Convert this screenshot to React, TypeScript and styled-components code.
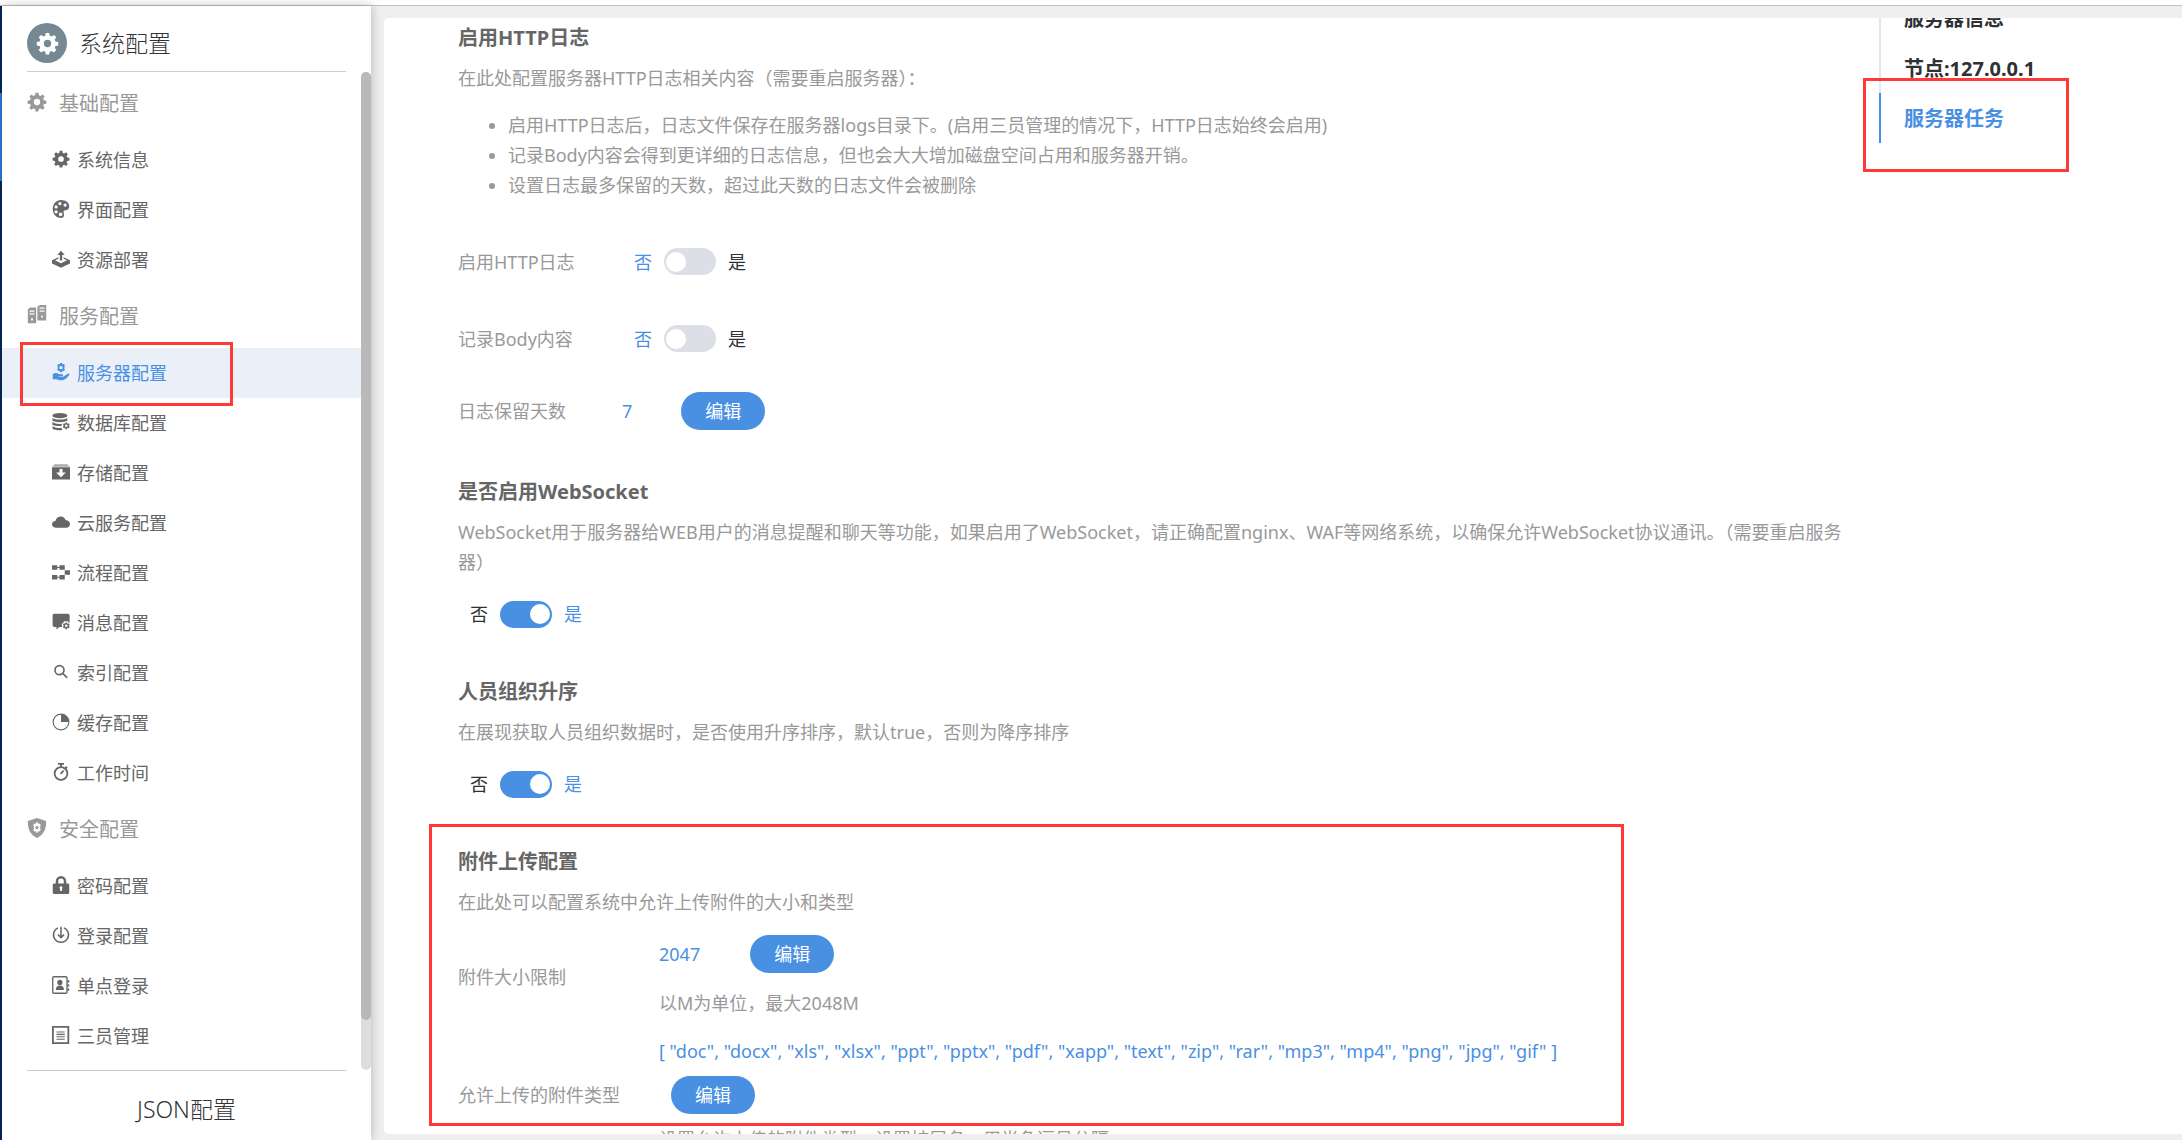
import React from "react";
import styled, { createGlobalStyle, css } from "styled-components";

const blue = "#4a90e2";

const GlobalStyle = createGlobalStyle`
  *, *::before, *::after { box-sizing: border-box; }
  body {
    margin: 0;
    background: #efefef;
    color: #333;
    font-family: "Noto Sans", "Noto Sans CJK SC", sans-serif;
    font-size: 18px;
    line-height: 30px;
  }
  h1, h2, p, ul { margin: 0; padding: 0; font-weight: inherit; }
  button, input { font: inherit; color: inherit; }
`;

const Page = styled.div`
  display: flex;
  flex-direction: column;
  height: 100vh;
  overflow: hidden;
`;

const TopBar = styled.header`
  flex: none;
  height: 6px;
  background: #fff;
  border-bottom: 1px solid #c0c0c0;
`;

const Body = styled.div`
  flex: 1;
  min-height: 0;
  display: flex;
`;

const Edge = styled.div`
  flex: none;
  width: 2px;
  background: linear-gradient(#06285a 87px, #2f7bdc 87px, #2f7bdc 175px, #06285a 175px);
`;

const Sidebar = styled.aside`
  flex: none;
  width: 369px;
  display: flex;
  flex-direction: column;
  background: #fff;
  box-shadow: 0 0 10px rgba(0, 0, 0, 0.25);
`;

const SideTitle = styled.div`
  flex: none;
  height: 66px;
  margin: 0 25px;
  padding: 17px 0 8px;
  display: flex;
  align-items: center;
  gap: 12px;
  border-bottom: 1px solid #ccc;

  h1 { font-size: 23px; font-weight: 300; }
`;

const Badge = styled.span`
  width: 40px;
  height: 40px;
  border-radius: 50%;
  display: grid;
  place-items: center;
  color: #fff;
  background: #768893;
`;

const MenuArea = styled.div`
  flex: 1;
  min-height: 0;
  display: flex;
`;

const Menu = styled.nav`
  flex: 1;
`;

const Track = styled.div`
  width: 10px;
  border-radius: 5px;
  background: #ddd;
`;

const Thumb = styled.div`
  height: 95%;
  border-radius: 5px;
  background: #b9b9b9;
`;

const GroupTitle = styled.h2`
  height: 63px;
  padding-left: 25px;
  display: flex;
  align-items: center;
  gap: 12px;
  color: #999;
  font-size: 20px;

  svg { width: 20px; height: 20px; margin-bottom: 4px; }
`;

const Item = styled.a<{ $active?: boolean }>`
  position: relative;
  height: 50px;
  padding-left: 50px;
  display: flex;
  align-items: center;
  gap: 7px;
  color: ${(p) => (p.$active ? blue : "#666")};
  background: ${(p) => (p.$active ? "#ebf0f8" : "transparent")};
  text-decoration: none;

  svg { width: 18px; height: 18px; margin-bottom: 2px; }
`;

const SideFooter = styled.a`
  flex: none;
  height: 70px;
  margin: 0 25px;
  padding-top: 7px;
  display: flex;
  align-items: center;
  justify-content: center;
  border-top: 1px solid #ccc;
  color: #333;
  font-size: 23px;
  font-weight: 300;
  text-decoration: none;
`;

const Panel = styled.div`
  flex: 1;
  min-width: 0;
  margin: 12px 0 6px 13px;
  border-radius: 5px 0 0 5px;
  display: flex;
  overflow: hidden;
  background: #fff;
`;

const Content = styled.main`
  flex: 1;
  min-width: 0;
  padding: 5px 20px 0 74px;
  color: #999;
`;

const Section = styled.section<{ $gap?: number }>`
  position: relative;
  display: flex;
  flex-direction: column;
  margin-bottom: ${(p) => p.$gap ?? 0}px;
`;

const Heading = styled.h2`
  margin-bottom: 10px;
  color: #666;
  font-size: 20px;
  font-weight: 700;
`;

const Notes = styled.ul`
  margin-top: 17px;
  margin-bottom: 23px;
  padding-left: 50px;
`;

const Row = styled.div<{ $height: number }>`
  min-height: ${(p) => p.$height}px;
  display: grid;
  grid-template-columns: 164px 1fr;
  align-items: center;
`;

const UploadRow = styled.div`
  display: grid;
  grid-template-columns: 201px 1fr;
  align-items: center;
  margin-top: 18px;
`;

const Stack = styled.div<{ $gap: number }>`
  display: flex;
  flex-direction: column;
  gap: ${(p) => p.$gap}px;
`;

const Line = styled.div<{ $gap?: number; $indent?: number }>`
  display: flex;
  align-items: center;
  gap: ${(p) => p.$gap ?? 0}px;
  padding-left: ${(p) => p.$indent ?? 0}px;
`;

const Value = styled.span`
  color: ${blue};
`;

const EditButton = styled.button`
  width: 84px;
  height: 38px;
  padding: 0;
  border: 0;
  border-radius: 19px;
  background: ${blue};
  color: #fff;
  cursor: pointer;
`;

const SwitchLabel = styled.label<{ $top?: number }>`
  display: flex;
  align-items: center;
  gap: 12px;
  margin-top: ${(p) => p.$top ?? 0}px;
  padding-left: 12px;
`;

const SwitchWord = styled.span<{ $on: boolean }>`
  color: ${(p) => (p.$on ? blue : "#303133")};
`;

const SwitchInput = styled.input`
  appearance: none;
  width: 52px;
  height: 27px;
  margin: 0;
  padding: 2px;
  display: flex;
  align-items: center;
  border-radius: 14px;
  background: #dcdfe6;
  cursor: pointer;

  &::before {
    content: "";
    width: 20px;
    height: 20px;
    border-radius: 50%;
    background: #fff;
  }

  &:checked {
    justify-content: flex-end;
    background: ${blue};
  }
`;

const Anchors = styled.nav`
  flex: none;
  width: 303px;
  margin-top: -25px;
  display: flex;
  flex-direction: column;
`;

const Anchor = styled.a<{ $active?: boolean }>`
  position: relative;
  height: 50px;
  padding-left: 23px;
  border-left: 2px solid #e4e7ed;
  color: #303133;
  font-size: 20px;
  font-weight: 700;
  line-height: 52px;
  text-decoration: none;

  ${(p) => p.$active && css`
    border-color: ${blue};
    color: ${blue};
  `}
`;

const Mark = styled.span<{ $box: string; $w: string; $h: number }>`
  position: absolute;
  inset: ${(p) => p.$box};
  width: ${(p) => p.$w};
  height: ${(p) => p.$h}px;
  border: 3px solid #ff3838;
  pointer-events: none;
  z-index: 2;
`;

const gearPath =
  "M10.2 1h3.6l.5 2.9 2 .8 2.400-1.700 2.500 2.500-1.700 2.400.8 2 2.900.5v3.600l-2.900.5-.8 2 1.700 2.400-2.500 2.500-2.400-1.700-2 .8-.5 2.900h-3.600l-.5-2.900-2-.8-2.400 1.700-2.500-2.500 1.700-2.400-.8-2-2.900-.5v-3.600l2.900-.5.8-2-1.700-2.400 2.500-2.500 2.400 1.700 2-.8zM12 8.200a3.800 3.800 0 1 0 0 7.600 3.800 3.800 0 0 0 0-7.600z";

const smallGear =
  "M18 12.500h2l.5 1.800 1.800-.6 1.200 1.800-1.200 1.500 1.200 1.500-1.200 1.800-1.800-.6-.5 1.800h-2l-.5-1.800-1.800.6-1.200-1.800 1.200-1.500-1.200-1.500 1.200-1.800 1.800.6zM19 15.300a1.700 1.700 0 1 0 0 3.400 1.700 1.700 0 0 0 0-3.400z";

const glyphs: Record<string, React.ReactNode> = {
  gear: <path fillRule="evenodd" d={gearPath} />,
  servers: (
    <path fillRule="evenodd" d="M1 5l3-2h7v19H1zM3 6.500v1.500h6V6.500zM3 10v1.500h6V10zM5 16v2.500h2V16zM12.500 2l3-2H23v18.500H12.500zM15 3v1.500h6V3zM15 6.500V8h6V6.500zM17 12.500V15h2v-2.500z" />
  ),
  shield: (
    <path fillRule="evenodd" d="M12 0l11 3.500c.3 9-2.500 16-11 20.500C3.500 19.500.7 12.500 1 3.500zM10.800 5.500l-.5 1.600-1.600-.4-1.300 2 1.200 1.300-.8 1.500.8 1.400-1.200 1.200 1.300 2 1.600-.4.5 1.600h2.400l.5-1.600 1.600.4 1.300-2-1.200-1.200.8-1.400-.8-1.500 1.200-1.300-1.300-2-1.600.4-.5-1.600zM12 9.500a2 2 0 1 1 0 4 2 2 0 0 1 0-4z" />
  ),
  palette: (
    <path fillRule="evenodd" d="M12 0c6.500 0 11 3.800 11 8.500 0 3.500-2.500 5-5 5-2.200 0-3 1.200-2.500 3l.5 3c.4 2.500-1.500 4.500-4 4.500C5.500 24 1 18.500 1 12S5.500 0 12 0zM10.500 2.500a2.200 2.200 0 1 0 0 4.400 2.200 2.200 0 0 0 0-4.400zM17.500 4.500a2.200 2.200 0 1 0 0 4.400 2.200 2.200 0 0 0 0-4.400zM5.500 7a2.200 2.200 0 1 0 0 4.400 2.200 2.200 0 0 0 0-4.400zM5.500 13.500a2.200 2.200 0 1 0 0 4.400 2.200 2.200 0 0 0 0-4.400zM11.500 16.500a2.500 2.500 0 1 0 0 5 2.500 2.500 0 0 0 0-5z" />
  ),
  deploy: (
    <path fillRule="evenodd" d="M12 1l5 5.500h-3.500V14h-3V6.500H7zM8.500 9.500v2L4 13.800l8 3.700 8-3.700-4.500-2.300v-2l8.500 4V18l-12 5.500L0 18v-4.500z" />
  ),
  handGear: (
    <path fillRule="evenodd" d="M10.800 0h2.600l.4 1.800 1.800-.6L17.400 3.400l-1.200 1.400.8 1.200-.8 1.400 1.200 1.400-1.800 2.200-1.800-.6-.4 1.800h-2.600l-.4-1.800-1.800.6L6.800 8.800 8 7.400 7.200 6 8 4.800 6.800 3.400l1.800-2.200 1.800.6zM12 4a2.200 2.200 0 1 0 0 4.400A2.200 2.200 0 0 0 12 4zM1 14.500c3-2 6-1.500 8.500.5h4c1.800 0 1.800 2.300 0 2.500H9v.8h6l6-4c1.500-.8 3 .5 2 1.800-2.500 3.500-5.500 6.400-9 6.900-4.500.4-7-1.500-9-1.500H1z" />
  ),
  database: (
    <>
      <ellipse cx="10.500" cy="3.500" rx="10" ry="3.500" />
      <path d="M.5 6.500c4 3 16 3 20 0V10c-4 3-16 3-20 0zM.5 12c3.500 2.500 9 3 13 2.200l-1 3c-4 .5-9 0-12-1.700zM.5 17.500c3 2 8 2.800 12 2.200l1.500 2.800c-5 1.300-13.500 0-13.500-2.500z" />
      <path fillRule="evenodd" d={smallGear} />
    </>
  ),
  storage: (
    <>
      <path opacity=".55" d="M3.500 1.500h17L23.500 5H.5z" />
      <path fillRule="evenodd" d="M0 5.500h24V22H0zM10 8v4.500H5.500L12 19l6.500-6.500H14V8z" />
    </>
  ),
  cloud: <path d="M5 19.500C1.500 19.500 0 17.300 0 15c0-2.600 2-4.300 4.500-4.500C5.200 7 8 4.500 11.500 4.500c3.200 0 5.800 1.800 6.800 5 3.500.2 5.700 2.200 5.700 5 0 3-2.200 5-5 5z" />,
  flow: (
    <path d="M0 3h7v6H0zM10 3h7v6h-7zM17 9.500h7v6h-7zM0 16h7v6H0zM10 16h7v6h-7zM7 5.200h3v1.500H7zM7 18.200h3v1.500H7z" />
  ),
  message: (
    <>
      <path d="M3 1h18c1.500 0 2.500 1 2.500 2.500V13l-3-2h-4L13 15l.5 3.500H10L6 22v-3.500H3C1.500 18.500.8 17.500.8 16V3.500C.8 2 1.500 1 3 1z" />
      <path fillRule="evenodd" d={smallGear} />
    </>
  ),
  search: <path fill="none" stroke="currentColor" strokeWidth="2.200" d="M10 3.500a6 6 0 1 0 0 12 6 6 0 0 0 0-12zM14.300 13.800l6 6" />,
  pie: (
    <>
      <circle cx="12" cy="12" r="10.500" fill="none" stroke="currentColor" strokeWidth="1.500" />
      <path d="M12 1.500A10.500 10.500 0 0 1 22.500 12H12z" />
    </>
  ),
  timer: (
    <path fill="none" stroke="currentColor" strokeWidth="2.400" d="M12 5.500a8.500 8.500 0 1 0 0 17 8.500 8.500 0 0 0 0-17zM8 1.200h8M12 1.500v4M11.500 14.500l4-4.500M18 5l2 2" />
  ),
  lock: (
    <path fillRule="evenodd" d="M5 10V7a7 7 0 0 1 14 0v3h2c1.200 0 2 .8 2 2v10c0 1.200-.8 2-2 2H3c-1.200 0-2-.8-2-2V12c0-1.200.8-2 2-2zM8.300 10h7.400V7a3.700 3.700 0 0 0-7.400 0zM12 13.500a2 2 0 0 0-1.200 3.600V20h2.400v-2.900A2 2 0 0 0 12 13.500z" />
  ),
  login: (
    <path fill="none" stroke="currentColor" strokeWidth="2" d="M8 2.500a10 10 0 1 0 8 0M12 1v14M8 11.500l4 4 4-4" />
  ),
  contact: (
    <>
      <path fill="none" stroke="currentColor" strokeWidth="1.800" d="M2.500 1h16c1 0 1.500.5 1.500 1.500v19c0 1-.5 1.500-1.500 1.500h-16C1.500 23 1 22.500 1 21.500v-19C1 1.500 1.500 1 2.500 1z" />
      <circle cx="10.500" cy="8.500" r="3.500" />
      <path d="M5 18.500c0-4 2-6 5.500-6s5.500 2 5.500 6zM20.500 5.500h2.500v3h-2.500zM20.500 11h2.500v3h-2.500zM20.500 16.500h2.500v3h-2.500z" />
    </>
  ),
  list: (
    <>
      <path fill="none" stroke="currentColor" strokeWidth="2.400" d="M1.200 1.200h20.600v21.600H1.200z" />
      <path fill="none" stroke="currentColor" strokeWidth="1.500" d="M6 8h11M6 11.200h11M6 14.400h11M6 17.600h11" />
    </>
  ),
};

const Icon = ({ name, size = 18 }: { name: string; size?: number }) => (
  <svg width={size} height={size} viewBox="0 0 24 24" fill="currentColor" aria-hidden="true">
    {glyphs[name]}
  </svg>
);

const groups = [
  {
    title: "基础配置",
    icon: "gear",
    items: [["gear", "系统信息"], ["palette", "界面配置"], ["deploy", "资源部署"]],
  },
  {
    title: "服务配置",
    icon: "servers",
    items: [
      ["handGear", "服务器配置"],
      ["database", "数据库配置"],
      ["storage", "存储配置"],
      ["cloud", "云服务配置"],
      ["flow", "流程配置"],
      ["message", "消息配置"],
      ["search", "索引配置"],
      ["pie", "缓存配置"],
      ["timer", "工作时间"],
    ],
  },
  {
    title: "安全配置",
    icon: "shield",
    items: [["lock", "密码配置"], ["login", "登录配置"], ["contact", "单点登录"], ["list", "三员管理"]],
  },
];

const extensions = ["doc", "docx", "xls", "xlsx", "ppt", "pptx", "pdf", "xapp", "text", "zip", "rar", "mp3", "mp4", "png", "jpg", "gif"];

const Switch = ({ name, initial, top }: { name: string; initial: boolean; top?: number }) => {
  const [on, setOn] = React.useState(initial);
  return (
    <SwitchLabel $top={top}>
      <SwitchWord $on={!on}>否</SwitchWord>
      <SwitchInput type="checkbox" role="switch" aria-label={name} checked={on} onChange={() => setOn(!on)} />
      <SwitchWord $on={on}>是</SwitchWord>
    </SwitchLabel>
  );
};

export default function App() {
  return (
    <Page>
      <GlobalStyle />
      <TopBar />
      <Body>
        <Edge />
        <Sidebar>
          <SideTitle>
            <Badge><Icon name="gear" size={23} /></Badge>
            <h1>系统配置</h1>
          </SideTitle>
          <MenuArea>
            <Menu>
              {groups.map((group) => (
                <div key={group.title}>
                  <GroupTitle><Icon name={group.icon} />{group.title}</GroupTitle>
                  {group.items.map(([icon, label]) => {
                    const active = label === "服务器配置";
                    return (
                      <Item key={label} href="#" $active={active}>
                        <Icon name={icon} />
                        {label}
                        {active && <Mark $box="-6px auto auto 18px" $w="213px" $h={64} />}
                      </Item>
                    );
                  })}
                </div>
              ))}
            </Menu>
            <Track><Thumb /></Track>
          </MenuArea>
          <SideFooter href="#">JSON配置</SideFooter>
        </Sidebar>
        <Panel>
          <Content>
            <Section $gap={32}>
              <Heading>启用HTTP日志</Heading>
              <p>在此处配置服务器HTTP日志相关内容（需要重启服务器）：</p>
              <Notes>
                <li>启用HTTP日志后，日志文件保存在服务器logs目录下。(启用三员管理的情况下，HTTP日志始终会启用)</li>
                <li>记录Body内容会得到更详细的日志信息，但也会大大增加磁盘空间占用和服务器开销。</li>
                <li>设置日志最多保留的天数，超过此天数的日志文件会被删除</li>
              </Notes>
              <Row $height={77}>
                <span>启用HTTP日志</span>
                <Switch name="启用HTTP日志" initial={false} />
              </Row>
              <Row $height={77}>
                <span>记录Body内容</span>
                <Switch name="记录Body内容" initial={false} />
              </Row>
              <Row $height={68}>
                <span>日志保留天数</span>
                <Line $gap={49}><Value>7</Value><EditButton>编辑</EditButton></Line>
              </Row>
            </Section>
            <Section $gap={48}>
              <Heading>是否启用WebSocket</Heading>
              <p>WebSocket用于服务器给WEB用户的消息提醒和聊天等功能，如果启用了WebSocket，请正确配置nginx、WAF等网络系统，以确保允许WebSocket协议通讯。（需要重启服务器）</p>
              <Switch name="是否启用WebSocket" initial top={22} />
            </Section>
            <Section $gap={48}>
              <Heading>人员组织升序</Heading>
              <p>在展现获取人员组织数据时，是否使用升序排序，默认true，否则为降序排序</p>
              <Switch name="人员组织升序" initial top={22} />
            </Section>
            <Section>
              <Mark $box="-23px auto auto -29px" $w="1195px" $h={302} />
              <Heading>附件上传配置</Heading>
              <p>在此处可以配置系统中允许上传附件的大小和类型</p>
              <UploadRow>
                <span>附件大小限制</span>
                <Stack $gap={15}>
                  <Line $gap={50}><Value>2047</Value><EditButton>编辑</EditButton></Line>
                  <p>以M为单位，最大2048M</p>
                </Stack>
              </UploadRow>
              <UploadRow>
                <span>允许上传的附件类型</span>
                <Stack $gap={10}>
                  <Value>[ {extensions.map((e) => `"${e}"`).join(", ")} ]</Value>
                  <Line $indent={12}><EditButton>编辑</EditButton></Line>
                  <p>设置允许上传的附件类型，设置扩展名，用半角逗号分隔</p>
                </Stack>
              </UploadRow>
            </Section>
          </Content>
          <Anchors>
            <Anchor href="#">服务器信息</Anchor>
            <Anchor href="#">节点:127.0.0.1</Anchor>
            <Anchor href="#" $active>
              服务器任务
              <Mark $box="-15px auto auto -18px" $w="206px" $h={94} />
            </Anchor>
          </Anchors>
        </Panel>
      </Body>
    </Page>
  );
}
